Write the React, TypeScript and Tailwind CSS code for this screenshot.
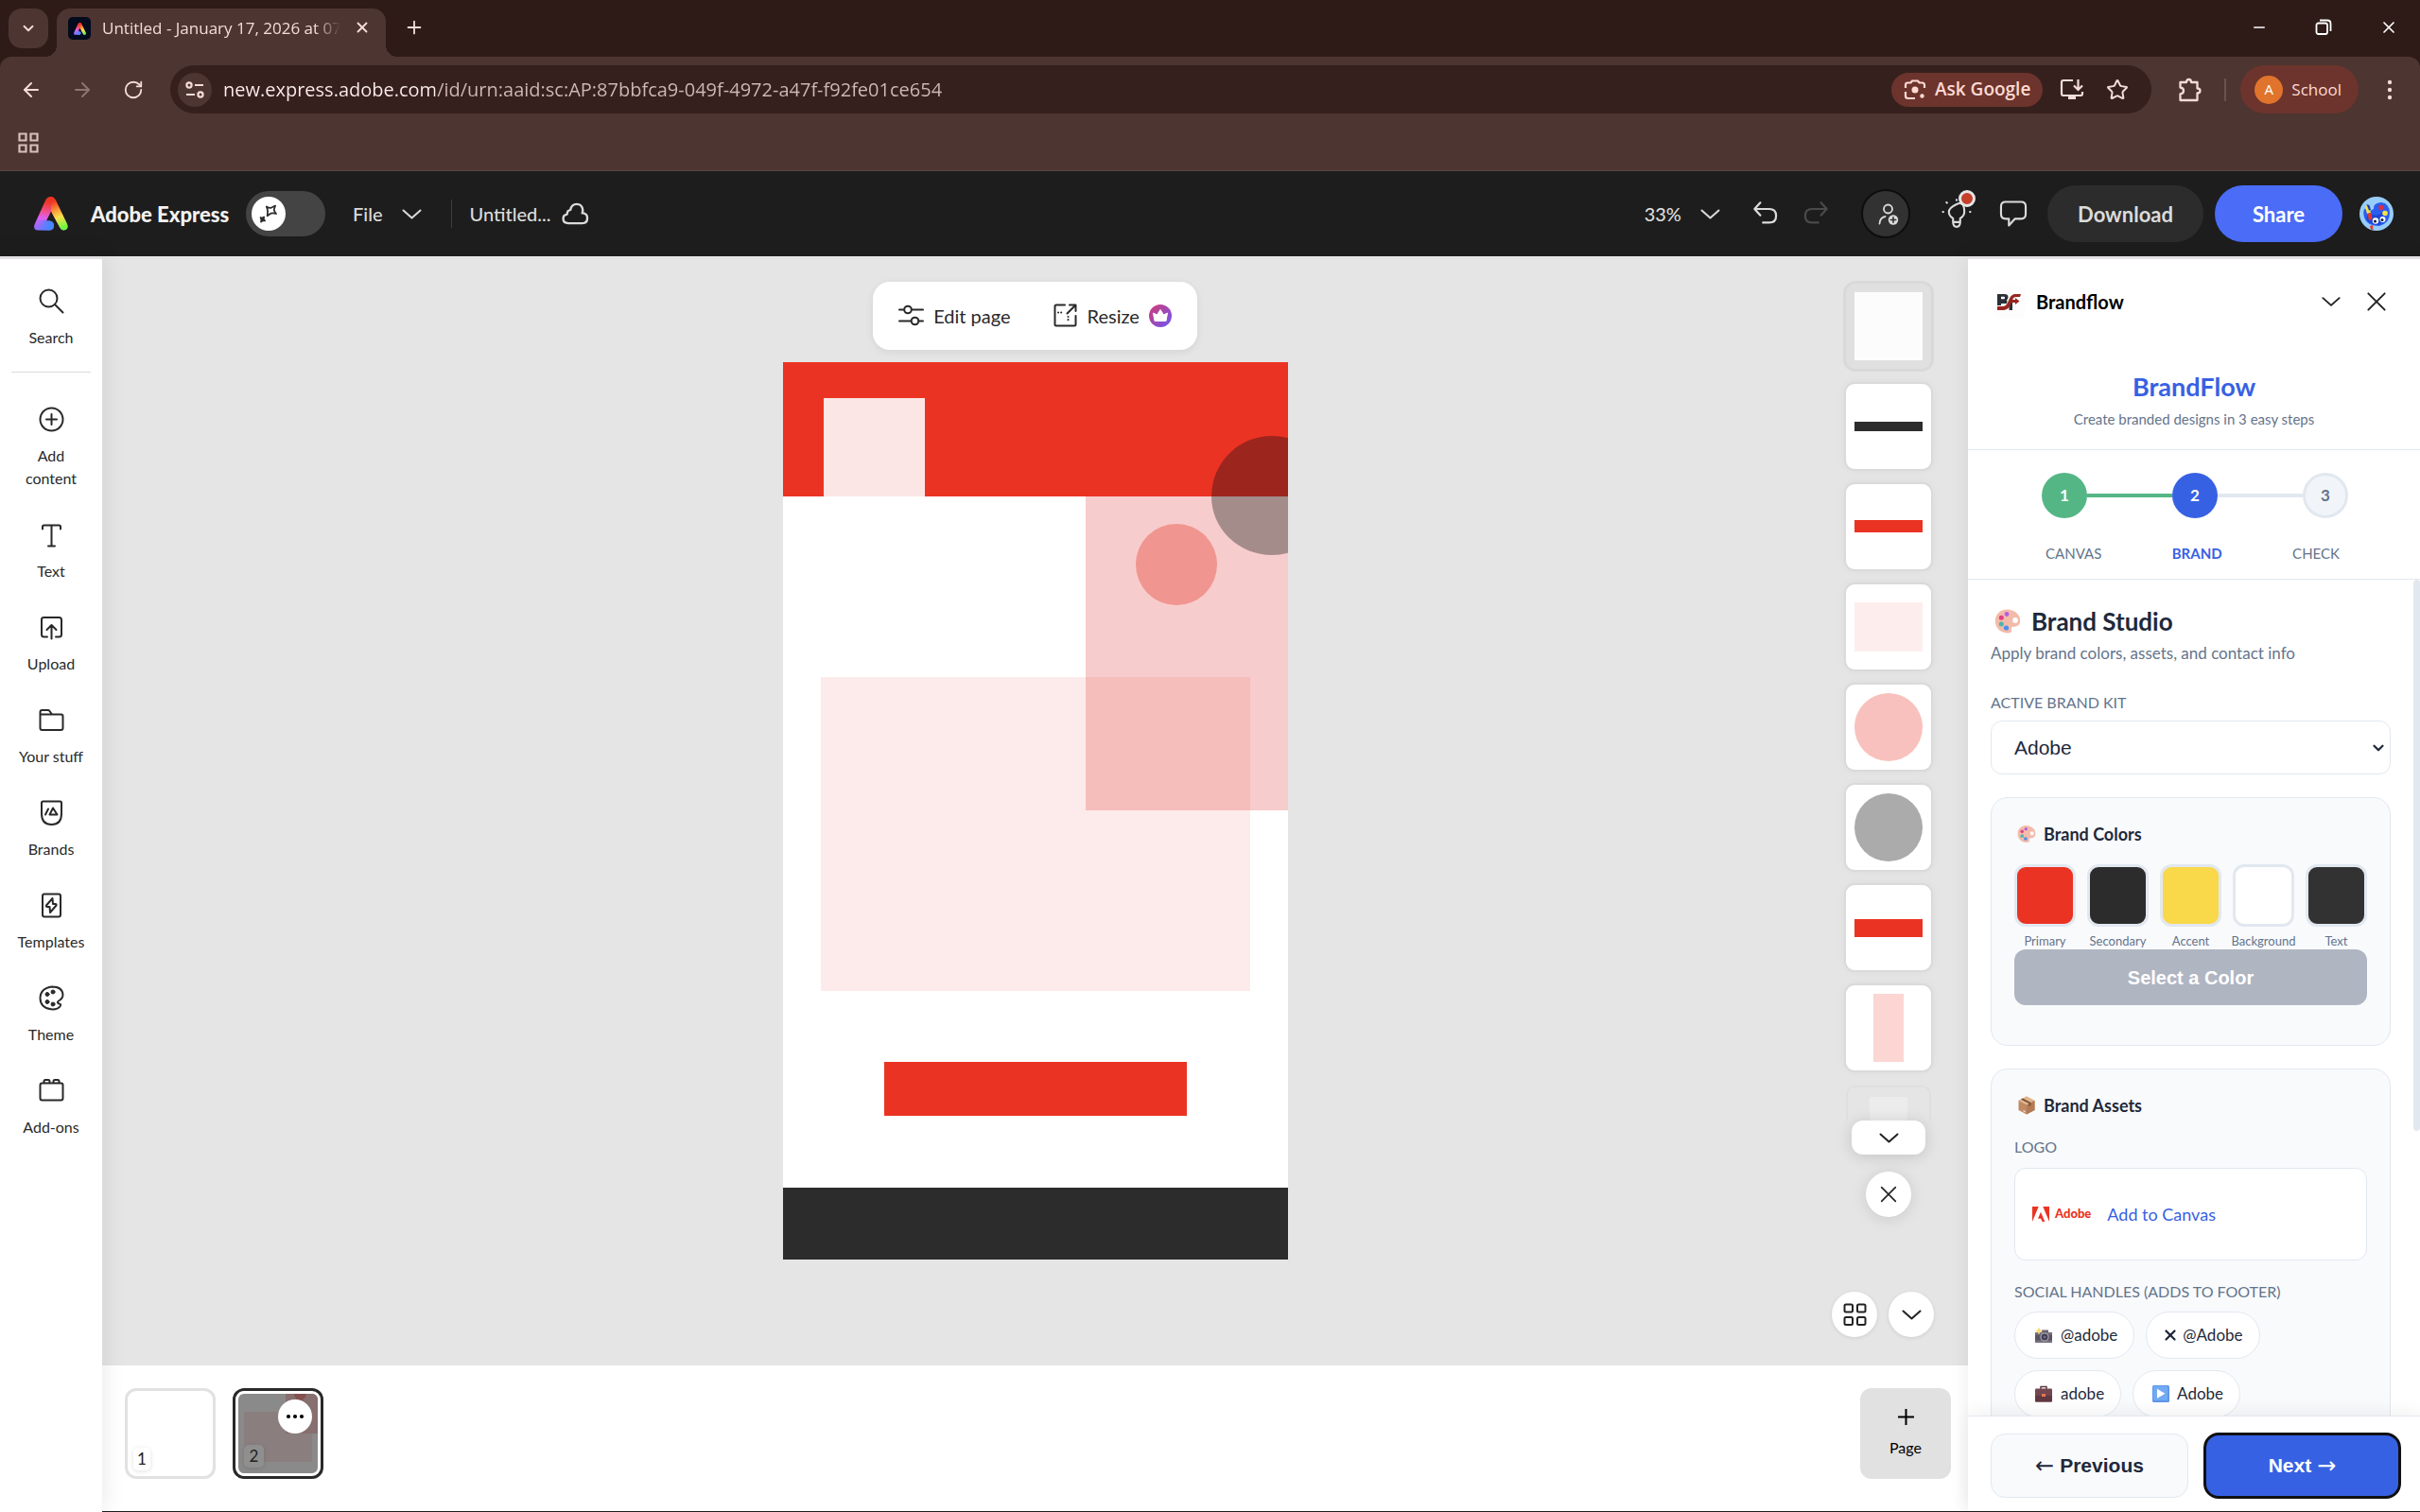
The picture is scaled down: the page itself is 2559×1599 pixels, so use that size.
import type { ReactNode } from "react";
import { ArrowLeft, ArrowRight, ChevronDown, Minus, Plus, RotateCw, Star, X } from "lucide-react";

function Icon({ size = 27, className = "", children }: { size?: number; className?: string; children: ReactNode }) {
  return (
    <svg
      width={size}
      height={size}
      viewBox="0 0 27 27"
      fill="none"
      stroke="currentColor"
      strokeWidth="2"
      strokeLinecap="round"
      strokeLinejoin="round"
      className={"shrink-0 " + className}
      aria-hidden="true"
    >
      {children}
    </svg>
  );
}

function Chevron({ size = 27 }: { size?: number }) {
  return (
    <Icon size={size}>
      <path d="M4.500 9.500 13.500 17.500l9-8" />
    </Icon>
  );
}

function Cross({ size = 27 }: { size?: number }) {
  return (
    <Icon size={size}>
      <path d="M4.500 4.500l18 18M22.500 4.500l-18 18" />
    </Icon>
  );
}

const logoShape =
  "M12 4Q14 0 17.500 0Q21 0 23 4L35 29Q37 35 31.500 35.500Q29 35.500 27.500 33L18 15.500L13 25.500H16Q21 26 21 30.500Q21 35.500 16 35.500H4Q-1.500 35 .7 29Z";

function ExpressLogo({ size, id }: { size: number; id: string }) {
  return (
    <svg width={size} height={size} viewBox="0 0 36 36" className="shrink-0" aria-hidden="true">
      <defs>
        <linearGradient id={id + "l"} gradientUnits="userSpaceOnUse" x1="16" y1="2" x2="12" y2="36">
          <stop offset=".1" stopColor="#ee3524" />
          <stop offset=".45" stopColor="#f0539b" />
          <stop offset=".62" stopColor="#d960f2" />
          <stop offset="1" stopColor="#8b6cfa" />
        </linearGradient>
        <linearGradient id={id + "b"} gradientUnits="userSpaceOnUse" x1="3" y1="30" x2="16" y2="32">
          <stop offset="0" stopColor="#4b84ff" stopOpacity="0" />
          <stop offset=".9" stopColor="#4b84ff" />
        </linearGradient>
        <linearGradient id={id + "r"} gradientUnits="userSpaceOnUse" x1="18" y1="2" x2="31" y2="35">
          <stop offset=".1" stopColor="#ee3524" />
          <stop offset=".4" stopColor="#f9a13a" />
          <stop offset=".6" stopColor="#fbe149" />
          <stop offset=".95" stopColor="#6df53e" />
        </linearGradient>
        <clipPath id={id + "c"}>
          <path d={logoShape} />
        </clipPath>
      </defs>
      <g clipPath={`url(#${id}c)`}>
        <path d="M0 0H36V36H0Z" fill={`url(#${id}l)`} />
        <path d="M0 25H24V36H0Z" fill={`url(#${id}b)`} />
        <path d="M18 0H36V36H25L18 15Z" fill={`url(#${id}r)`} />
      </g>
    </svg>
  );
}

function PaletteEmoji({ size }: { size: number }) {
  return (
    <svg width={size} height={size} viewBox="0 0 28 28" className="shrink-0" aria-hidden="true">
      <path
        fillRule="evenodd"
        fill="#f4bba9"
        d="M13 1.500C6 1.500.8 6.500.8 13.500S6 26.500 14.500 26.500c3 0 4-1.500 3.500-3.500-.6-2 .4-3.200 2.500-3.200 4.500 0 6.700-2.500 6.700-6.300C27.200 6.500 21 1.500 13 1.500Zm9 8.500c1.700 0 2.800 1.300 2.800 2.900S23.700 16 22 16s-2.800-1.400-2.800-3.100S20.300 10 22 10Z"
      />
      <circle cx="13" cy="6.500" r="2.400" fill="#b45ee8" />
      <circle cx="7.300" cy="10.300" r="2.500" fill="#e0408a" />
      <circle cx="7.300" cy="17" r="2.500" fill="#4fb3b0" />
      <circle cx="12.500" cy="21" r="2.600" fill="#4a90ee" />
    </svg>
  );
}

function BoxEmoji() {
  return (
    <svg width="20" height="20" viewBox="0 0 20 20" className="shrink-0" aria-hidden="true">
      <path d="M10 .5 18.500 5v10L10 19.500 1.500 15V5Z" fill="#c08a63" />
      <path d="M10 .5 18.500 5 10 9.500 1.500 5Z" fill="#e2b68d" />
      <path d="M10 9.500 18.500 5v10L10 19.500Z" fill="#b37a55" />
      <path d="M6 2.600 14.500 7v3l-2 1V8L4 3.700Z" fill="#7a5138" />
      <path d="M6.500 15l2 1v1.500l-2-1Z" fill="#f0e0ee" />
    </svg>
  );
}

function CameraEmoji() {
  return (
    <svg width="20" height="18" viewBox="0 0 20 18" className="shrink-0" aria-hidden="true">
      <path d="M1 6h18v11H1Z" fill="#77727f" />
      <path d="M1 8.500h18v6H1Z" fill="#5a5562" />
      <path d="M8 3.500h7V6H8Z" fill="#69646f" />
      <circle cx="11" cy="11" r="4.800" fill="#99939f" />
      <circle cx="11" cy="11" r="3.200" fill="#3e3a4a" />
      <circle cx="11" cy="11" r="1.500" fill="#6d6b95" />
      <path d="M5 .5 6.200 3.300 9 4.500 6.200 5.700 5 8.500 3.800 5.700 1 4.500 3.800 3.300Z" fill="#fbd874" />
    </svg>
  );
}

function BriefcaseEmoji() {
  return (
    <svg width="20" height="18" viewBox="0 0 20 18" className="shrink-0" aria-hidden="true">
      <path d="M7 4V1.500h6V4" fill="none" stroke="#5b3a41" strokeWidth="1.500" />
      <rect x="1" y="3.500" width="18" height="14" rx="1" fill="#744650" />
      <path d="M1 11h18v5.500q0 1-1 1H2q-1 0-1-1Z" fill="#613842" />
      <rect x="8" y="9" width="4" height="3" fill="#e0784e" />
    </svg>
  );
}

function PlayEmoji() {
  return (
    <svg width="18" height="18" viewBox="0 0 18 18" className="shrink-0" aria-hidden="true">
      <rect width="18" height="18" rx="1.500" fill="#5f97ea" />
      <rect x="1" y="1" width="15" height="15" rx="1" fill="#72aaf3" />
      <path d="M5 3.800v10L13.500 8.800Z" fill="#fff" />
    </svg>
  );
}

function BrowserChrome() {
  return (
    <div className="bg-[#2e1b18] font-['Open_Sans',sans-serif] text-[#f3dcd8]">
      <div className="flex h-[60px] items-start pt-[9px] pl-[9px]">
        <button aria-label="Search tabs" className="flex size-[42px] items-center justify-center rounded-[14px] bg-[#4d3531]">
          <ChevronDown size={18} strokeWidth={2.500} />
        </button>
        <div className="relative ml-[9px] flex h-[51px] w-[348px] items-start gap-3 rounded-t-[14px] bg-[#4d3531] pt-[9px] pr-3 pl-3">
          <span className="absolute bottom-0 -left-3 size-3 bg-[radial-gradient(circle_at_0_0,transparent_12px,#4d3531_12px)]" />
          <span className="absolute -right-3 bottom-0 size-3 bg-[radial-gradient(circle_at_100%_0,transparent_12px,#4d3531_12px)]" />
          <span className="flex size-6 shrink-0 items-center justify-center rounded-[5px] bg-[#020b1d]">
            <ExpressLogo size={13} id="fav" />
          </span>
          <span className="mt-[2px] w-[254px] shrink-0 text-[17px] leading-5 whitespace-nowrap [mask-image:linear-gradient(90deg,#000_225px,transparent_252px)]">
            Untitled - January 17, 2026 at 07
          </span>
          <button aria-label="Close tab" className="mt-[2px]">
            <X size={18} strokeWidth={2.500} />
          </button>
        </div>
        <button aria-label="New tab" className="ml-[19px] mt-[9px]">
          <Plus size={22} strokeWidth={2} />
        </button>
        <div className="ml-auto mt-[10px] flex items-center gap-[50px] pr-[23px] text-white">
          <button aria-label="Minimize"><Minus size={18} strokeWidth={2} /></button>
          <button aria-label="Restore">
            <svg width="18" height="18" viewBox="0 0 18 18" fill="none" stroke="currentColor" strokeWidth="1.800" aria-hidden="true">
              <rect x="1.500" y="4.500" width="11.500" height="11.500" rx="2" />
              <path d="M5 1.500h8q3.500 0 3.500 3.500v8" />
            </svg>
          </button>
          <button aria-label="Close window"><X size={20} strokeWidth={2} /></button>
        </div>
      </div>

      <div className="rounded-t-[12px] border-b border-[#5a4641] bg-[#4d3531]">
        <div className="flex h-[69px] items-center pr-[22px] pl-[21px]">
          <button aria-label="Back"><ArrowLeft size={24} /></button>
          <button aria-label="Forward" className="ml-[30px] text-[#8d7571]"><ArrowRight size={24} /></button>
          <button aria-label="Reload" className="ml-[31px]"><RotateCw size={22} /></button>
          <div className="ml-[28px] flex h-[51px] flex-1 items-center rounded-full bg-[#36201d] pr-[24px] pl-[8px]">
            <button aria-label="Site information" className="flex size-9 shrink-0 items-center justify-center rounded-full bg-[#4d3531]">
              <svg width="20" height="20" viewBox="0 0 20 20" fill="none" stroke="currentColor" strokeWidth="2.200" aria-hidden="true">
                <circle cx="4" cy="5" r="2.600" />
                <path d="M10 5h9M1 15h9" />
                <circle cx="16" cy="15" r="2.600" />
              </svg>
            </button>
            <input
              aria-label="Address"
              readOnly
              value="new.express.adobe.com/id/urn:aaid:sc:AP:87bbfca9-049f-4972-a47f-f92fe01ce654"
              className="ml-3 h-9 min-w-0 flex-1 bg-[linear-gradient(90deg,#fff0ed_224px,#cfbab6_224px)] bg-clip-text text-[20px] text-transparent outline-none"
            />
            <button className="flex h-9 items-center gap-[9px] rounded-full bg-[#6c342c] px-[13px] text-[19px] font-semibold text-[#ffdad4]">
              <svg width="24" height="24" viewBox="0 0 24 24" fill="none" stroke="currentColor" strokeWidth="2.200" aria-hidden="true">
                <path d="M2 10V7q0-2.500 2.500-2.500h3L9 2.500h6l1.500 2h3Q22 4.500 22 7v3M2 14v4.500Q2 21 4.500 21H12" />
                <circle cx="12" cy="12" r="3.500" fill="currentColor" stroke="none" />
                <circle cx="19.500" cy="18.500" r="2.200" fill="currentColor" stroke="none" />
              </svg>
              Ask Google
            </button>
            <button aria-label="Install app" className="ml-[18px]">
              <svg width="26" height="24" viewBox="0 0 26 24" fill="none" stroke="currentColor" strokeWidth="2.200" aria-hidden="true">
                <path d="M14 2H4Q2 2 2 4v12q0 2 2 2h18q2 0 2-2v-2M19.500 1v10M15 7.500l4.500 4.500L24 7.500" />
                <path d="M9 18h8v4H9Z" fill="currentColor" stroke="none" />
              </svg>
            </button>
            <button aria-label="Bookmark" className="ml-[23px]"><Star size={24} /></button>
          </div>
          <button aria-label="Extensions" className="ml-[28px]">
            <svg width="26" height="26" viewBox="0 0 26 26" fill="none" stroke="currentColor" strokeWidth="2.300" strokeLinejoin="round" aria-hidden="true">
              <path d="M2.500 5H9q0-3 2.500-3T14 5h6.500v6.500q3 0 3 2.500t-3 2.500V24h-18v-6.500q3.500-.5 3.500-3.500t-3.500-3.500Z" />
            </svg>
          </button>
          <span className="ml-[23px] h-6 w-[2px] bg-[#6b524e]" />
          <button className="ml-[15px] flex h-[51px] items-center gap-[9px] rounded-full bg-[#6c342c] pr-[18px] pl-[15px] text-[17px] text-[#ffdad4]">
            <span className="flex size-[30px] items-center justify-center rounded-full bg-[#e0742c] text-[15px] text-white">A</span>
            School
          </button>
          <button aria-label="Menu" className="ml-[23px] flex w-5 justify-center">
            <svg width="6" height="22" viewBox="0 0 6 22" fill="currentColor" aria-hidden="true">
              <circle cx="3" cy="3" r="2.200" />
              <circle cx="3" cy="11" r="2.200" />
              <circle cx="3" cy="19" r="2.200" />
            </svg>
          </button>
        </div>
        <div className="flex h-[51px] items-start pt-[11px] pl-[19px]">
          <button aria-label="Apps">
            <svg width="22" height="22" viewBox="0 0 22 22" fill="none" stroke="#d8c1bc" strokeWidth="2.200" aria-hidden="true">
              <path d="M1.500 1.500h7v7h-7ZM13.500 1.500h7v7h-7ZM1.500 13.500h7v7h-7ZM13.500 13.500h7v7h-7Z" />
            </svg>
          </button>
        </div>
      </div>
    </div>
  );
}

function AppHeader() {
  return (
    <header className="flex h-[90px] items-center bg-[#1d1d1d] pr-[28px] pl-[36px] text-[#dbdbdb]">
      <ExpressLogo size={36} id="hd" />
      <span className="ml-6 w-[152px] text-[22px] font-black whitespace-nowrap text-[#f2f2f2]">Adobe Express</span>
      <label className="ml-3 flex h-12 w-[84px] items-center rounded-full bg-[#444] pl-[6px]">
        <input type="checkbox" className="sr-only" aria-label="Assistant" />
        <span className="flex size-9 items-center justify-center rounded-full bg-white text-[#2c2c2c]">
          <Icon size={24}>
            <path d="M11 5q3.500 2 5.500 1.500L21.500 4 20 8.500q.3 2.500 2.500 5-3.500-1.200-6-.5l-4.500 3 .5-5Q12.500 8.500 11 5Z" />
            <path d="M4 18l2 .8 2-1.300-.4 2.400 1.500 2-2.500-.2-2 1.500.3-2.600Z" fill="currentColor" />
          </Icon>
        </span>
      </label>
      <button className="ml-[29px] flex items-center gap-[17px] text-[20px] font-medium">
        File
        <Chevron />
      </button>
      <span className="ml-[28px] h-[30px] w-px bg-[#3d3d3d]" />
      <button className="ml-[19px] flex items-center gap-[10px] text-[20px] font-medium">
        Untitled...
        <Icon size={32}>
          <path d="M7.500 22q-4.500 0-4.500-4 0-3.500 3.500-4 0-3.500 3-4 1-5 5.500-5 5 0 5.500 5.500l-.5 2.500q4.500 0 4.500 4.500T20 22Z" />
        </Icon>
      </button>

      <div className="ml-auto flex items-center">
        <button className="flex items-center gap-[17px] text-[20px] font-medium">
          33%
          <Chevron />
        </button>
        <button aria-label="Undo" className="ml-[30px]">
          <Icon size={30}>
            <path d="M3 9h14q6.500 0 6.500 6.500T17 22h-6M8.500 3 3 9l5.500 6" />
          </Icon>
        </button>
        <button aria-label="Redo" className="ml-[23px] text-[#4a4a4a]">
          <Icon size={30}>
            <path d="M24 9H10q-6.500 0-6.500 6.500T10 22h6M18.500 3 24 9l-5.500 6" />
          </Icon>
        </button>
        <button aria-label="Add people" className="ml-[33px] flex size-[52px] items-center justify-center rounded-full border-2 border-[#0e0e0e] bg-[#323232]">
          <Icon size={27}>
            <circle cx="15.500" cy="8" r="4.500" strokeWidth="1.800" />
            <path d="M6.500 23.500q.5-6.500 6-7.500" strokeWidth="1.800" />
            <circle cx="21" cy="19.500" r="5.200" fill="currentColor" stroke="none" />
            <path d="M21 16.800v5.400M18.300 19.500h5.400" stroke="#323232" strokeWidth="1.600" />
          </Icon>
        </button>
        <button aria-label="What's new" className="relative ml-[32px]">
          <Icon size={34}>
            <path d="M10.500 20.500v-3Q7 15.500 7 12t6.500-6.500T20 12q0 3.500-3.500 5.500v3ZM10.500 20.500q0 4 3 4t3-4M2 12h.3M24.700 12h.3M13.500 1.800v.3M5 4l.4.4" strokeWidth="1.700" />
          </Icon>
          <span className="absolute -top-2 left-[19px] size-[18px] rounded-full border-[3px] border-[#e6e6e6] bg-[#c4402a]" />
        </button>
        <button aria-label="Comments" className="ml-[27px]">
          <Icon size={32}>
            <path d="M6.500 3h14Q24.500 3 24.500 7v7q0 4-4 4H15l-5.500 6v-6h-3q-4 0-4-4V7q0-4 4-4Z" strokeWidth="1.800" />
          </Icon>
        </button>
        <button className="ml-[20px] h-[60px] w-[165px] rounded-full bg-[#2c2c2c] text-[22px] font-bold">Download</button>
        <button className="ml-3 h-[60px] w-[135px] rounded-full bg-[#4a6cf7] text-[22px] font-bold text-white">Share</button>
        <button aria-label="Account" className="ml-[18px]">
          <svg width="36" height="36" viewBox="0 0 36 36" aria-hidden="true">
            <circle cx="18" cy="18" r="18" fill="#97cdf8" />
            <path d="M15 13q-1-6 8-7 9 1 9 11.500T21 31Q8 31 5 22q-2-8 1-9.500 3 5 9 .5Z" fill="#2a5df0" />
            <path d="M10 17q8 6 14-1 4 9-3 14Q10 30 7 23Z" fill="#1c47d6" />
            <circle cx="23" cy="11.500" r="2.800" fill="#d92f45" />
            <circle cx="27" cy="17.500" r="2.800" fill="#f4df4e" />
            <circle cx="17" cy="25.500" r="3.200" fill="#fff" />
            <circle cx="24.500" cy="24" r="3" fill="#fff" />
            <circle cx="16.500" cy="26" r="1.600" fill="#123" />
            <circle cx="24" cy="24.500" r="1.500" fill="#123" />
            <path d="M6 11l3-3 3 9-4 1Z" fill="#f4df4e" />
            <path d="M7.500 8l3 1 1.500 5-2 .5Z" fill="#1a3bb0" />
            <path d="M8.500 18l4-1 1 7-3.500 1ZM11 31l3-1 .5 5-2.500-.5Z" fill="#e23a2a" />
          </svg>
        </button>
      </div>
    </header>
  );
}

const navItems = [
  {
    label: "Text",
    icon: <path d="M4 7.500V5q0-1.500 1.500-1.500h16q1.500 0 1.500 1.500v2.500M13.500 3.500v22M10 25.500h7" />,
  },
  {
    label: "Upload",
    icon: <path d="M9 23.500H5.500Q3 23.500 3 21V5q0-2 2.500-2h16Q24 3 24 5.500V21q0 2.500-2.500 2.500H18M13.500 25.500V11.500M8.500 16l5-5 5 5" />,
  },
  {
    label: "Your stuff",
    icon: <path d="M1.500 7.500h22q2 0 2 2V22q0 2-2 2h-20q-2 0-2-2V5q0-2 2-2h6q1.300 0 2 1l2.500 3.500" />,
  },
  {
    label: "Brands",
    icon: (
      <>
        <path d="M4.500 1.500h18q1.500 0 1.500 1.500v11.500q0 11.500-10.500 11.500T3 14.500V3q0-1.500 1.500-1.500Z" />
        <path d="M7 15.500l3-6M11.500 15.500l3.500-7 4.500 7Z" />
      </>
    ),
  },
  {
    label: "Templates",
    icon: (
      <>
        <rect x="4" y="1.500" width="19" height="24" rx="2" />
        <path d="M14.500 6 8 13.500q-.5 1.500 1 1.500h2.500L12 21l6.500-7.500q.5-1.500-1-1.500H15Z" />
      </>
    ),
  },
  {
    label: "Theme",
    icon: (
      <>
        <path d="M23 21.500q-.5 1.500-3 2.800-3.500 1.500-7 1Q2 24 1.500 14 1.500 3 14 1.500 25 1.500 25.500 10q0 4-4.500 6.500-2.500 1.500.5 3 2 0 1.500 2Z" />
        <g fill="currentColor" strokeWidth="1">
          <circle cx="9" cy="9.500" r="2" />
          <circle cx="15" cy="7" r="2" />
          <circle cx="9" cy="17.500" r="2" />
          <circle cx="15" cy="20" r="2" />
        </g>
      </>
    ),
  },
  {
    label: "Add-ons",
    icon: (
      <>
        <rect x="1.500" y="5.500" width="24" height="18" rx="2" />
        <path d="M5.500 5V3.500q0-1.500 1.500-1.500h3q1.500 0 1.500 1.500V5M15.500 5V3.500q0-1.500 1.500-1.500h3q1.500 0 1.500 1.500V5" />
      </>
    ),
  },
];

function NavButton({ label, children }: { label: string; children: ReactNode }) {
  return (
    <button className="flex w-full flex-col items-center gap-[9px] px-4 text-[16px] leading-6">
      <span className="flex size-9 items-center justify-center">
        <Icon>{children}</Icon>
      </span>
      {label}
    </button>
  );
}

function SideNav() {
  return (
    <nav className="z-10 flex w-[108px] shrink-0 flex-col items-center border-t-[3px] border-[#e3e0e3] bg-white pt-[26px] shadow-[0_0_24px_rgba(0,0,0,0.1)]">
      <NavButton label="Search">
        <circle cx="10.500" cy="10.500" r="9" />
        <path d="M17 17l8.500 8.500" />
      </NavButton>
      <hr className="mt-6 mb-[31px] w-[84px] border-[#dadada]" />
      <div className="flex w-full flex-col gap-[29px]">
        <NavButton label="Add content">
          <circle cx="13.500" cy="13.500" r="12" />
          <path d="M13.500 8v11M8 13.500h11" />
        </NavButton>
        {navItems.map((item) => (
          <NavButton key={item.label} label={item.label}>
            {item.icon}
          </NavButton>
        ))}
      </div>
    </nav>
  );
}

function Artwork() {
  return (
    <svg viewBox="0 0 534 949" className="mt-[13px] h-[949px] w-[534px] shrink-0 bg-white" role="img" aria-label="Page 2">
      <rect x="40" y="333" width="454" height="332" fill="#fcebea" />
      <rect x="320" y="142" width="214" height="332" fill="#f7cccc" />
      <rect x="320" y="333" width="174" height="141" fill="#f5bebb" />
      <rect width="534" height="142" fill="#eb3323" />
      <rect x="43" y="38" width="107" height="104" fill="#fbe6e5" />
      <path d="M453 142a64 64 0 0 1 128 0Z" fill="#9c251e" />
      <path d="M453 142a64 62 0 0 0 128 0Z" fill="#a48c8b" />
      <circle cx="416" cy="214" r="43" fill="#f09590" />
      <rect x="107" y="740" width="320" height="57" fill="#eb3323" />
      <rect y="873" width="534" height="76" fill="#2c2c2c" />
    </svg>
  );
}

const layers = [
  { name: "Footer bar", shape: <rect x="9" y="40" width="72" height="10" fill="#2c2c2c" /> },
  { name: "Button", shape: <rect x="9" y="38" width="72" height="13" fill="#eb3323" /> },
  { name: "Panel", shape: <rect x="9" y="19" width="72" height="52" fill="#fdeeed" /> },
  { name: "Circle", shape: <circle cx="45" cy="45" r="36" fill="#f9c1bd" /> },
  { name: "Shadow circle", shape: <circle cx="45" cy="45" r="36" fill="#ababab" /> },
  { name: "Header bar", shape: <rect x="9" y="36" width="72" height="19" fill="#eb3323" /> },
  { name: "Column", shape: <rect x="29" y="9" width="32" height="72" fill="#fbd6d3" /> },
];

function Layers() {
  return (
    <div className="absolute top-[29px] right-9 flex w-24 flex-col items-center">
      <div className="flex flex-col gap-4">
        <button aria-label="Background" className="flex size-[90px] items-center justify-center rounded-[10px] bg-[#e0e0e0] ring-[3px] ring-[#d9d9d9]">
          <span className="size-[72px] bg-[#fcfcfc]" />
        </button>
        {layers.map((layer) => (
          <button key={layer.name} aria-label={layer.name} className="size-[90px] rounded-[9px] bg-white shadow-[0_0_0_2px_#dadada,0_0_12px_rgba(0,0,0,0.06)]">
            <svg viewBox="0 0 90 90" aria-hidden="true">{layer.shape}</svg>
          </button>
        ))}
        <div className="flex h-[37px] w-[90px] justify-center rounded-t-[9px] border-2 border-b-0 border-[#dfdfdf] pt-[10px]">
          <span className="w-10 bg-[#ececec]" />
        </div>
      </div>
      <button aria-label="Scroll layers" className="flex h-9 w-[78px] items-center justify-center rounded-[12px] bg-white text-[#222] shadow-[0_2px_16px_rgba(0,0,0,0.15)]">
        <Chevron size={27} />
      </button>
      <button aria-label="Close layers" className="mt-[18px] flex size-12 items-center justify-center rounded-full bg-white text-[#222] shadow-[0_2px_16px_rgba(0,0,0,0.12)]">
        <Cross size={22} />
      </button>
    </div>
  );
}

function Canvas() {
  return (
    <main className="relative flex min-h-0 flex-1 flex-col items-center overflow-hidden bg-[#e5e5e5] pt-[27px]">
      <div className="flex h-[72px] shrink-0 items-center gap-[44px] rounded-[18px] bg-white px-[27px] pb-px text-[20px] text-[#292929] shadow-[0_2px_8px_rgba(0,0,0,0.08)]">
        <button className="flex items-center gap-[10px]">
          <Icon>
            <path d="M1 7.500h5M14 7.500h12M1 19.500h12M21.500 19.500H26" />
            <circle cx="10" cy="7.500" r="3.800" />
            <circle cx="17.500" cy="19.500" r="3.800" />
          </Icon>
          Edit page
        </button>
        <button className="flex items-center gap-[10px]">
          <Icon>
            <path d="M13 2.500H4q-1.500 0-1.500 1.500v19q0 1.500 1.500 1.500h19q1.500 0 1.500-1.500V14M15.500 11.500l9-9M18 2.500h6.500V9" />
            <path d="M6 10.500h6M16.500 15v6" strokeDasharray=".1 3" />
          </Icon>
          Resize
          <svg width="24" height="24" viewBox="0 0 24 24" aria-hidden="true">
            <linearGradient id="crown" x1="0" y1="0" x2="1" y2="1">
              <stop offset="0" stopColor="#d63a73" />
              <stop offset="1" stopColor="#6b57f5" />
            </linearGradient>
            <circle cx="12" cy="12" r="12" fill="url(#crown)" />
            <path d="M6 17.500 4.500 9l4 2L12 5.500l3.500 5.500 4-2-1.500 8.500Z" fill="#fff" stroke="#fff" strokeLinejoin="round" />
          </svg>
        </button>
      </div>
      <Artwork />
      <Layers />
      <div className="absolute right-9 bottom-[30px] flex gap-3 text-[#222]">
        <button aria-label="Grid view" className="flex size-12 items-center justify-center rounded-full bg-white shadow-[0_1px_4px_rgba(0,0,0,0.1)]">
          <Icon>
            <path d="M4 2.500h5.500q1.500 0 1.500 1.500v5q0 1.500-1.500 1.500H4Q2.500 10.500 2.500 9V4Q2.500 2.500 4 2.500ZM17.500 2.500H23q1.500 0 1.500 1.500v5q0 1.500-1.500 1.500h-5.500Q16 10.500 16 9V4q0-1.500 1.500-1.500ZM4 16h5.500q1.500 0 1.500 1.500v5q0 1.500-1.500 1.500H4q-1.500 0-1.500-1.500v-5Q2.500 16 4 16ZM17.500 16H23q1.500 0 1.500 1.500v5q0 1.500-1.500 1.500h-5.500q-1.500 0-1.500-1.500v-5q0-1.500 1.500-1.500Z" />
          </Icon>
        </button>
        <button aria-label="Hide pages" className="flex size-12 items-center justify-center rounded-full bg-white shadow-[0_1px_4px_rgba(0,0,0,0.1)]">
          <Chevron size={27} />
        </button>
      </div>
    </main>
  );
}

function PageStrip() {
  return (
    <div className="flex h-[155px] shrink-0 items-start gap-[18px] border-b border-[#1d1d1d] bg-white pt-6 pr-[18px] pl-6 text-[17px] text-[#222]">
      <button className="relative size-24 rounded-[12px] border-[3px] border-[#e1e1e1] bg-white">
        <span className="absolute bottom-[6px] left-[6px] flex h-6 w-[18px] items-center justify-center rounded-[5px] bg-white shadow-[0_1px_5px_rgba(0,0,0,0.12)]">1</span>
      </button>
      <div className="relative size-24 rounded-[12px] border-[3px] border-[#292929] p-[3px]">
        <svg viewBox="0 0 84 84" className="rounded-[6px]" aria-hidden="true">
          <path d="M0 0h84v84H0Z" fill="#8a8a8a" />
          <path d="M6 19h72v53H6Z" fill="#8a7f7e" />
          <path d="M50 0h34v42H50Z" fill="#876f6f" />
          <path d="M59 0h13q-1 7-6.500 7T59 0Z" fill="#855150" />
        </svg>
        <span className="absolute bottom-[9px] left-[9px] flex h-6 w-[21px] items-center justify-center rounded-[5px] bg-[#8f8f8f] shadow-[0_1px_5px_rgba(0,0,0,0.12)]">2</span>
        <button aria-label="Page options" className="absolute top-[9px] right-[9px] flex size-9 items-center justify-center rounded-full bg-white text-black">
          <svg width="20" height="6" viewBox="0 0 20 6" fill="currentColor" aria-hidden="true">
            <circle cx="3" cy="3" r="2.100" />
            <circle cx="10" cy="3" r="2.100" />
            <circle cx="17" cy="3" r="2.100" />
          </svg>
        </button>
      </div>
      <button className="ml-auto flex size-24 flex-col items-center justify-center gap-[7px] rounded-[12px] bg-[#e1e1e1] pb-1 text-[16px] leading-6 text-black">
        <Icon size={27}>
          <path d="M13.500 5v17M5 13.500h17" strokeLinecap="butt" />
        </Icon>
        Page
      </button>
    </div>
  );
}

const swatches = [
  { name: "Primary", color: "bg-[#eb3323]" },
  { name: "Secondary", color: "bg-[#2c2c2c]" },
  { name: "Accent", color: "bg-[#f9d84a]" },
  { name: "Background", color: "bg-white" },
  { name: "Text", color: "bg-[#323232]" },
];

const handles = [
  { label: "@adobe", icon: <CameraEmoji /> },
  { label: "@Adobe", icon: <X size={18} strokeWidth={3} className="-mx-1" /> },
  { label: "adobe", icon: <BriefcaseEmoji /> },
  { label: "Adobe", icon: <PlayEmoji /> },
];

function Steps() {
  return (
    <div className="border-b border-[#e2e8f0] pt-6 pr-[76px] pb-[15px] pl-[78px] text-[17px] font-bold">
      <div className="flex items-center">
        <span className="flex size-12 items-center justify-center rounded-full bg-[#55b685] text-white">1</span>
        <span className="h-1 flex-1 bg-[#55b685]" />
        <span className="flex size-12 items-center justify-center rounded-full bg-[#3761e3] text-white">2</span>
        <span className="h-1 flex-1 bg-[#e2e8f0]" />
        <span className="flex size-12 items-center justify-center rounded-full border-[3px] border-[#e2e8f0] bg-[#f1f5f9] text-[#64748b]">3</span>
      </div>
      <div className="mt-[25px] flex justify-between pr-[9px] pl-1 text-[15px] leading-6 font-normal text-[#64748b]">
        <span>CANVAS</span>
        <span className="font-bold text-[#3761e3]">BRAND</span>
        <span>CHECK</span>
      </div>
    </div>
  );
}

function BrandPanel() {
  return (
    <aside className="z-10 flex w-[478px] shrink-0 flex-col border-t-[3px] border-b border-t-[#e3e0e3] border-b-[#1d1d1d] bg-white text-[#1e293b] shadow-[0_0_20px_rgba(0,0,0,0.08)]">
      <div className="flex h-[90px] shrink-0 items-center pr-[33px] pl-[25px] text-[#222]">
        <span className="flex size-9 items-center justify-center rounded-[9px] bg-[#fdfdfd]">
          <svg width="26" height="20" viewBox="0 0 26 20" aria-hidden="true">
            <path
              fillRule="evenodd"
              fill="#2b2f36"
              d="M1 2H8.500q4 0 4 3.300 0 2-1.500 3Q12 9.500 11 12H5v2H1ZM5 4.800v2.400h3q1 0 1-1.200T8 4.800Z"
            />
            <path d="M13.500 10H17v9h-3.500Z" fill="#2b2f36" />
            <path
              d="M1 15h6q3 0 5-4l2-4.500Q16 2 20 2h6l-1 3h-4q-3 0-3.800 3H20V6l4.500 3.500L20 13v-2h-4q-2.500 7.500-8 8H1Z"
              fill="#97261f"
            />
          </svg>
        </span>
        <span className="ml-[11px] text-[20px] font-bold text-black">Brandflow</span>
        <button aria-label="Collapse" className="ml-auto"><Chevron size={26} /></button>
        <button aria-label="Close panel" className="ml-[22px]"><Cross size={26} /></button>
      </div>

      <div className="shrink-0 border-b border-[#e2e8f0] pt-[27px] pb-5 text-center">
        <h1 className="text-[27px] leading-9 font-bold text-[#3761e3]">BrandFlow</h1>
        <p className="mt-1 text-[15px] leading-6 text-[#64748b]">Create branded designs in 3 easy steps</p>
      </div>

      <Steps />

      <div className="relative min-h-0 flex-1 overflow-hidden pt-[26px] pr-[31px] pl-6">
        <span className="absolute top-0 right-0 h-[583px] w-[7px] rounded-[4px] bg-[#e2e8f0]" />
        <h2 className="flex items-center gap-[11px] pl-1 text-[26px] leading-9 font-bold">
          <PaletteEmoji size={28} />
          Brand Studio
        </h2>
        <p className="mt-1 text-[17px] leading-6 text-[#64748b]">Apply brand colors, assets, and contact info</p>

        <label htmlFor="kit" className="mt-7 block text-[16px] leading-6 text-[#64748b]">ACTIVE BRAND KIT</label>
        <div className="relative mt-[7px]">
          <select
            id="kit"
            className="h-[57px] w-full appearance-none rounded-[12px] border border-[#e2e8f0] bg-white pl-6 font-['Liberation_Sans',sans-serif] text-[21px]"
          >
            <option>Adobe</option>
          </select>
          <ChevronDown size={18} strokeWidth={3} className="pointer-events-none absolute top-5 right-1" />
        </div>

        <section className="mt-6 h-[263px] rounded-[18px] border border-[#e2e8f0] bg-[#f9fafc] px-6 pt-[26px]">
          <h3 className="flex items-center gap-2 pl-[3px] text-[18px] leading-6 font-bold">
            <PaletteEmoji size={20} />
            Brand Colors
          </h3>
          <div className="mt-5 grid grid-cols-5 gap-3 text-[#64748b]">
            {swatches.map((swatch) => (
              <button key={swatch.name} className="flex flex-col items-center gap-[6px] text-[13px] leading-[18px]">
                <span className={"h-[66px] w-full rounded-[12px] border-[3px] border-[#e2e8f0] " + swatch.color} />
                {swatch.name}
              </button>
            ))}
          </div>
          <button className="relative h-[59px] w-full rounded-[12px] bg-[#b0b5c2] font-['Liberation_Sans',sans-serif] text-[20px] font-bold text-white">
            Select a Color
          </button>
        </section>

        <section className="mt-6 rounded-[18px] border border-[#e2e8f0] bg-[#f9fafc] px-6 pt-[26px] pb-6">
          <h3 className="flex items-center gap-2 pl-[3px] text-[18px] leading-6 font-bold">
            <BoxEmoji />
            Brand Assets
          </h3>
          <p className="mt-5 text-[16px] leading-6 text-[#64748b]">LOGO</p>
          <button className="mt-[10px] flex h-[98px] w-full items-center rounded-[12px] border border-[#e2e8f0] bg-white pl-[18px] text-[18px] text-[#3761e3]">
            <svg width="18" height="16" viewBox="0 0 18 16" fill="#eb3323" aria-hidden="true">
              <path d="M0 0h6.700L0 16ZM11.300 0H18v16ZM9 5.800 13.300 16h-2.800L9.200 12.800H6Z" />
            </svg>
            <span className="ml-[6px] text-[13px] font-black text-[#eb3323]">Adobe</span>
            <span className="ml-[17px]">Add to Canvas</span>
          </button>
          <p className="mt-[21px] text-[16px] leading-6 text-[#64748b]">SOCIAL HANDLES (ADDS TO FOOTER)</p>
          <div className="mt-[9px] flex flex-wrap gap-3 pr-20">
            {handles.map((handle) => (
              <button key={handle.label} className="flex h-[50px] items-center gap-2 rounded-full border border-[#e2e8f0] bg-white pr-[17px] pl-5 text-[17px]">
                {handle.icon}
                {handle.label}
              </button>
            ))}
          </div>
        </section>
      </div>

      <div className="relative flex shrink-0 gap-[17px] border-t border-[#e2e8f0] bg-white pt-[18px] pr-[21px] pb-[14px] pl-6 font-['Liberation_Sans',sans-serif] text-[21px] font-bold shadow-[0_-4px_18px_rgba(0,0,0,0.06)]">
        <button className="flex h-[68px] flex-1 items-center justify-center gap-[6px] rounded-[15px] border border-[#e2e8f0] bg-[#f9fafc]">
          <span className="font-['DejaVu_Sans',sans-serif] text-[24px] leading-6 font-normal">←</span>
          Previous
        </button>
        <button className="flex h-[68px] flex-1 items-center justify-center gap-[6px] rounded-[15px] bg-[#3761e3] text-white outline-3 -outline-offset-2 outline-[#101010]">
          Next
          <span className="font-['DejaVu_Sans',sans-serif] text-[24px] leading-6 font-normal">→</span>
        </button>
      </div>
    </aside>
  );
}

export default function App() {
  return (
    <div className="flex h-screen flex-col overflow-hidden bg-white font-[Lato,sans-serif]">
      <BrowserChrome />
      <AppHeader />
      <div className="flex min-h-0 flex-1 text-[#292929]">
        <SideNav />
        <div className="flex min-w-0 flex-1 flex-col">
          <Canvas />
          <PageStrip />
        </div>
        <BrandPanel />
      </div>
    </div>
  );
}
